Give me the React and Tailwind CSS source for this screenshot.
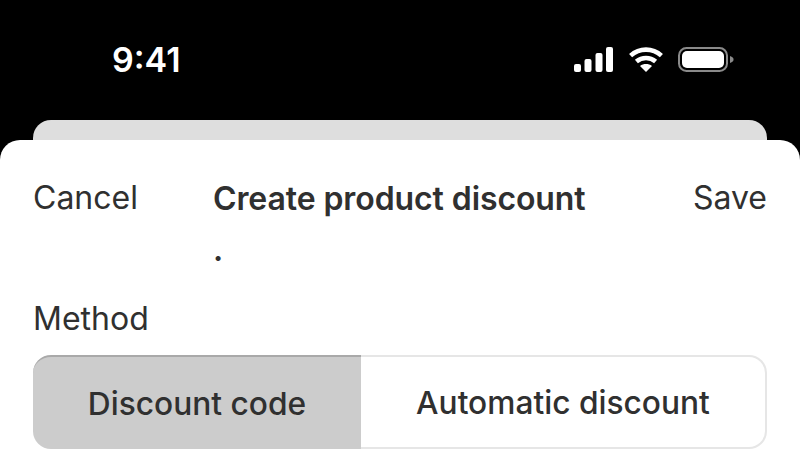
const SignalIcon = () => (
  <svg width="39" height="25" viewBox="0 0 39 25" fill="#fff">
    <rect x="0" y="17" width="7" height="8" rx="2" />
    <rect x="10.5" y="12" width="7" height="13" rx="2" />
    <rect x="21.5" y="6" width="7" height="19" rx="2" />
    <rect x="32" y="0" width="7" height="25" rx="2" />
  </svg>
);

const WifiIcon = () => (
  <svg width="34" height="25" viewBox="0 0 34 25" fill="none" stroke="#fff" strokeWidth="4.6" className="ml-px">
    <path d="M1.6 8.6 C10.5 0.6 23.5 0.6 32.4 8.6" />
    <path d="M7.4 14.6 C13 9.8 21 9.8 26.6 14.6" />
    <path d="M17 25 L11 19 C14.5 16.4 19.5 16.4 23 19 Z" fill="#fff" stroke="none" />
  </svg>
);

const BatteryIcon = () => (
  <svg width="56" height="25" viewBox="0 0 56 25" fill="none">
    <rect x="1" y="1" width="48" height="23" rx="7.5" stroke="#8a8a8a" strokeWidth="2" />
    <rect x="4" y="4" width="42" height="17" rx="5" fill="#fff" />
    <path d="M52 9 C54.5 9.8 55.5 10.8 55.5 12.5 C55.5 14.2 54.5 15.2 52 16 Z" fill="#8a8a8a" />
  </svg>
);

export default function App() {
  return (
    <div className="h-[450px] w-[800px] overflow-hidden bg-black flex flex-col font-['Inter',sans-serif] text-[#303030]">
      <div className="h-[120px] shrink-0 flex items-start justify-between pl-[112px] pr-[66px] pt-[40px]">
        <span className="text-[34px] leading-[40px] font-semibold text-white">9:41</span>
        <div className="flex items-center gap-[15px] pt-[7px]">
          <SignalIcon />
          <WifiIcon />
          <BatteryIcon />
        </div>
      </div>

      <div className="h-[20px] shrink-0 mx-[33px] bg-[#dedede] rounded-t-[18px]" />

      <div className="flex-1 bg-white rounded-t-[20px] px-[33px] pt-[38px]">
        <div className="flex items-start justify-between">
          <button className="text-[32px] leading-[40px]">Cancel</button>
          <h1 className="w-[405px] text-[32px] leading-[51px] -mt-[5px] font-semibold tracking-[-0.09px]">
            Create product discount
            <br />.
          </h1>
          <button className="text-[32px] leading-[40px]">Save</button>
        </div>

        <p className="mt-[24px] text-[32px] leading-[40px]">Method</p>

        <div className="mt-[16px] h-[94px] flex text-[31.7px] font-medium">
          <div className="w-[328px] pt-[2px] rounded-l-[18px] bg-[#cccccc] border-t-2 border-[#a9a9a9] flex items-center justify-center">
            Discount code
          </div>
          <div className="flex-1 pt-[2px] rounded-r-[18px] border-2 border-l-0 border-[#e6e6e6] flex items-center justify-center">
            Automatic discount
          </div>
        </div>
      </div>
    </div>
  );
}
